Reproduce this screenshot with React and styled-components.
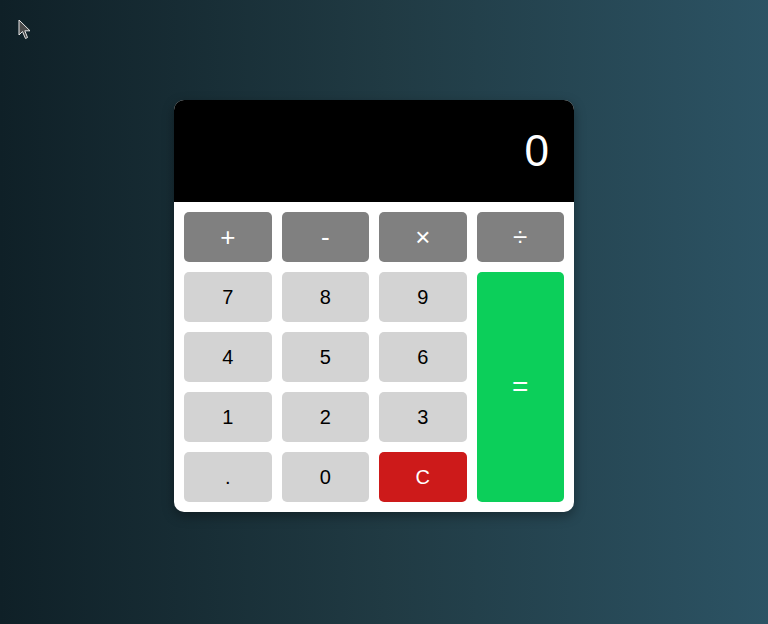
import React, {useState} from 'react';
import styled, {createGlobalStyle} from 'styled-components';

const GlobalStyle = createGlobalStyle`
    html, body {
        margin: 0;
        padding: 0;
    }
    body {
        font-family: "Liberation Sans", Arial, sans-serif;
    }
`;

const Page = styled.div`
    position: relative;
    min-height: 100vh;
    box-sizing: border-box;
    display: flex;
    align-items: center;
    justify-content: center;
    padding: 0 20px 12px 0;
    background: linear-gradient(to right, #0f2027, #203a43, #2c5364);
`;

const Cursor = styled.svg`
    position: absolute;
    left: 18px;
    top: 19px;
`;

const Calculator = styled.div`
    width: 400px;
    background-color: #fff;
    border-radius: 10px;
    overflow: hidden;
    box-shadow: 0px 4px 12px rgba(0, 0, 0, 0.35);
`;

const Display = styled.div`
    height: 102px;
    box-sizing: border-box;
    background-color: #000;
    color: #fff;
    display: flex;
    align-items: center;
    justify-content: flex-end;
    padding: 0 25px;
    font-size: 44px;
`;

const Keys = styled.div`
    display: grid;
    grid-template-columns: repeat(4, 1fr);
    grid-auto-rows: 50px;
    gap: 10px;
    padding: 10px;
`;

const colors = {
    op: {bg: '#808080', fg: '#fff', size: '26px'},
    num: {bg: '#d3d3d3', fg: '#000', size: '20px'},
    clear: {bg: '#cd1a1a', fg: '#fff', size: '20px'},
    equal: {bg: '#0ccf5a', fg: '#fff', size: '28px'},
};

const Key = styled.button`
    border: none;
    border-radius: 5px;
    cursor: pointer;
    font-family: "Liberation Sans", Arial, sans-serif;
    font-size: ${p => colors[p.$kind].size};
    background-color: ${p => colors[p.$kind].bg};
    color: ${p => colors[p.$kind].fg};
    grid-row: ${p => (p.$tall ? 'span 4' : 'auto')};
    padding: 0;
`;

const App = () => {
    const [value, setValue] = useState('0');

    const press = (k) => {
        if (k === 'C') return setValue('0');
        if (k === '=') {
            try {
                const expr = value.replace(/×/g, '*').replace(/÷/g, '/');
                // eslint-disable-next-line no-new-func
                setValue(String(Function(`return (${expr})`)()));
            } catch (e) {
                setValue('0');
            }
            return;
        }
        setValue(value === '0' && k !== '.' ? k : value + k);
    };

    return (
        <Page>
            <GlobalStyle/>
            <Cursor width="14" height="22" viewBox="0 0 14 22">
                <path d="M1 1 L1 16 L4.5 12.5 L7.5 19.5 L9.5 18.5 L6.8 11.8 L12 11.8 Z"
                      fill="#4a4a4a" stroke="#e8e8e8" strokeWidth="1"/>
            </Cursor>
            <Calculator>
                <Display>{value}</Display>
                <Keys>
                    <Key $kind="op" onClick={() => press('+')}>+</Key>
                    <Key $kind="op" onClick={() => press('-')}>-</Key>
                    <Key $kind="op" onClick={() => press('×')}>×</Key>
                    <Key $kind="op" onClick={() => press('÷')}>÷</Key>
                    <Key $kind="num" onClick={() => press('7')}>7</Key>
                    <Key $kind="num" onClick={() => press('8')}>8</Key>
                    <Key $kind="num" onClick={() => press('9')}>9</Key>
                    <Key $kind="equal" $tall onClick={() => press('=')}>=</Key>
                    <Key $kind="num" onClick={() => press('4')}>4</Key>
                    <Key $kind="num" onClick={() => press('5')}>5</Key>
                    <Key $kind="num" onClick={() => press('6')}>6</Key>
                    <Key $kind="num" onClick={() => press('1')}>1</Key>
                    <Key $kind="num" onClick={() => press('2')}>2</Key>
                    <Key $kind="num" onClick={() => press('3')}>3</Key>
                    <Key $kind="num" onClick={() => press('.')}>.</Key>
                    <Key $kind="num" onClick={() => press('0')}>0</Key>
                    <Key $kind="clear" onClick={() => press('C')}>C</Key>
                </Keys>
            </Calculator>
        </Page>
    );
};

export default App;
